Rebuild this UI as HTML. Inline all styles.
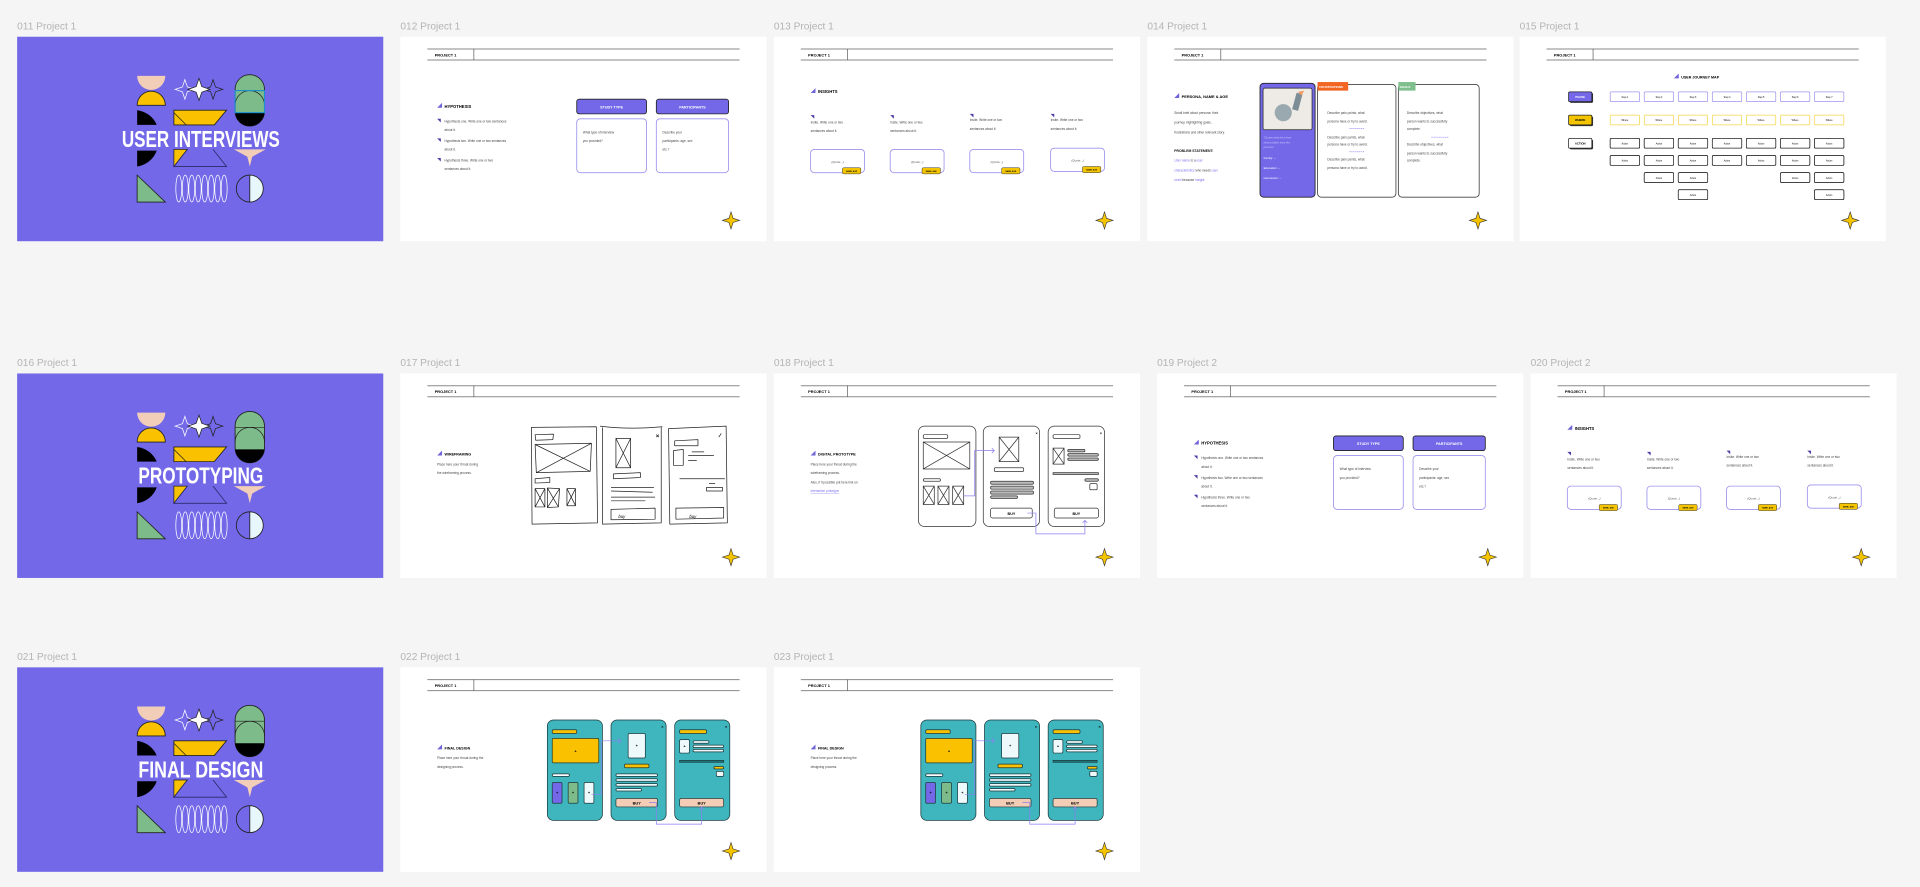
<!DOCTYPE html>
<html><head><meta charset="utf-8">
<style>
html,body{margin:0;padding:0;background:#f5f5f5;overflow:hidden;width:1920px;height:887px}
#w{position:absolute;left:0;top:0;width:1568px;height:724px;transform:scale(1.22449);transform-origin:0 0;font-family:"Liberation Sans",sans-serif}
.l{position:absolute;font-size:8.3px;color:#b4b4b4;white-space:nowrap}
.c{position:absolute;width:299px;height:167px;background:#fff}
.c svg{position:absolute;left:0;top:0;width:299px;height:167px}
.p{background:#7369e8}
text{font-family:"Liberation Sans",sans-serif}
</style></head><body><div id="w">

<svg width="0" height="0" style="position:absolute"><defs>
<g id="hdr">
<line x1="22" y1="10" x2="277" y2="10" stroke="#8a8a8a" stroke-width=".8"/>
<line x1="22" y1="19" x2="277" y2="19" stroke="#8a8a8a" stroke-width=".8"/>
<line x1="60" y1="10" x2="60" y2="19" stroke="#444" stroke-width=".5"/>
</g>
<g id="star"><path d="M270 143 L271.7 148.3 L277 150 L271.7 151.7 L270 157 L268.3 151.7 L263 150 L268.3 148.3Z" fill="#f5c400" stroke="#333" stroke-width=".5"/></g>
<g id="ico"><polygon points="0,4 4,0 4,4" fill="#6f63d9"/></g>
<g id="flag"><polygon points="0,0 3,0 3,3" fill="#4b3fa8"/></g>
<g id="cover">
<path d="M98 32 A11.5 11.5 0 0 0 121 32 Z" fill="#f2cdb8"/>
<path d="M98 56 A11.5 11.5 0 0 1 121 56 Z" fill="#f9c100" stroke="#222" stroke-width=".7"/>
<path d="M98 60 A20 20 0 0 1 114 72 L98 72 Z" fill="#000"/>
<path d="M98 106 A20 20 0 0 0 114 93 L98 93 Z" fill="#000"/>
<polygon points="98,113 98,135 121,135" fill="#7dbb8a" stroke="#222" stroke-width=".7"/>
<path d="M137 35 L139 41 L145 43 L139 45 L137 51 L135 45 L129 43 L135 41Z" fill="none" stroke="#fff" stroke-width=".6"/>
<path d="M160 35 L162 41 L168 43 L162 45 L160 51 L158 45 L152 43 L158 41Z" fill="none" stroke="#222" stroke-width=".6"/>
<path d="M148.5 34 L150.8 40.7 L157.5 43 L150.8 45.3 L148.5 52 L146.2 45.3 L139.5 43 L146.2 40.7Z" fill="#fff" stroke="#222" stroke-width=".6"/>
<polygon points="128,60 171,60 161,72 128,72" fill="#f9c100" stroke="#222" stroke-width=".7"/>
<line x1="128" y1="62" x2="138" y2="72" stroke="#222" stroke-width=".6"/>
<polygon points="128,92 139,92 128,106" fill="#f9c100" stroke="#222" stroke-width=".6"/>
<polyline points="139,92 128,106 171,106 160,92" fill="none" stroke="#2a2a6a" stroke-width=".7"/>
<g fill="none" stroke="#fff" stroke-width=".6">
<ellipse cx="132" cy="124" rx="2.4" ry="11"/><ellipse cx="137.3" cy="124" rx="2.4" ry="11"/><ellipse cx="142.6" cy="124" rx="2.4" ry="11"/><ellipse cx="147.9" cy="124" rx="2.4" ry="11"/><ellipse cx="153.2" cy="124" rx="2.4" ry="11"/><ellipse cx="158.5" cy="124" rx="2.4" ry="11"/><ellipse cx="163.8" cy="124" rx="2.4" ry="11"/><ellipse cx="169.1" cy="124" rx="2.4" ry="11"/></g>
<rect x="178" y="31" width="24" height="42" rx="12" fill="#7dbb8a" stroke="#222" stroke-width=".7"/>
<path d="M178 62 H202 V61 A0 0 0 0 1 202 61 V61 L202 61 A12 12 0 0 1 190 73 A12 12 0 0 1 178 61 Z" fill="#000"/>
<path d="M178 56 A12 12 0 0 1 202 56" fill="none" stroke="#222" stroke-width=".6"/>
<line x1="178" y1="44" x2="202" y2="44" stroke="#222" stroke-width=".5"/>
<polygon points="177,92 203,92 192,98 190,106 188,98" fill="#f2cdb8"/>
<path d="M190 113 A11 11 0 0 1 190 135 Z" fill="#e8f7fb"/>
<circle cx="190" cy="124" r="11" fill="none" stroke="#222" stroke-width=".7"/>
<line x1="190" y1="113" x2="190" y2="135" stroke="#222" stroke-width=".7"/>
</g>
</defs></svg>

<!-- ROW 1 -->
<div class="l" style="left:14px;top:16px">011 Project 1</div>
<div class="c p" style="left:14px;top:30px"><svg viewBox="0 0 299 167"><use href="#cover"/>
<rect x="178" y="44" width="24" height="18" fill="none" stroke="#1b8fd0" stroke-width=".9"/>
<text x="150" y="90" text-anchor="middle" font-size="19" font-weight="bold" fill="#fff" textLength="129" lengthAdjust="spacingAndGlyphs">USER INTERVIEWS</text></svg></div>

<div class="l" style="left:327px;top:16px">012 Project 1</div>
<div class="c" style="left:327px;top:30px"><svg viewBox="0 0 299 167"><use href="#hdr"/><use href="#star"/>
<text x="28" y="16" font-size="3.2" font-weight="bold">PROJECT 1</text>
<use href="#ico" x="30" y="54"/><text x="36" y="58" font-size="3.4" font-weight="bold">HYPOTHESIS</text>
<g font-size="2.6" fill="#444"><use href="#flag" x="30" y="67"/><text x="36" y="70">Hypothesis one. Write one or two sentances</text><text x="36" y="77">about it.</text>
<use href="#flag" x="30" y="83"/><text x="36" y="86">Hypothesis two. Write one or two sentances</text><text x="36" y="93">about it.</text>
<use href="#flag" x="30" y="99"/><text x="36" y="102">Hypothesis three. Write one or two</text><text x="36" y="109">sentances about it.</text></g>
<rect x="144" y="51" width="57" height="12" rx="2" fill="#7468e8" stroke="#222" stroke-width=".7"/><text x="172.5" y="58.5" text-anchor="middle" font-size="3" font-weight="bold" fill="#fff">STUDY TYPE</text>
<rect x="209" y="51" width="59" height="12" rx="2" fill="#7468e8" stroke="#222" stroke-width=".7"/><text x="238.5" y="58.5" text-anchor="middle" font-size="3" font-weight="bold" fill="#fff">PARTICIPANTS</text>
<rect x="144" y="67" width="57" height="44" rx="3" fill="#fff" stroke="#9d94ee" stroke-width=".7"/>
<rect x="209" y="67" width="59" height="44" rx="3" fill="#fff" stroke="#9d94ee" stroke-width=".7"/>
<g font-size="2.6" fill="#444"><text x="149" y="79">What type of interview</text><text x="149" y="86">you provided?</text>
<text x="214" y="79">Describe your</text><text x="214" y="86">participants: age, sex</text><text x="214" y="93">etc.?</text></g></svg></div>

<div class="l" style="left:632px;top:16px">013 Project 1</div>
<div class="c" style="left:632px;top:30px"><svg viewBox="0 0 299 167"><use href="#hdr"/><use href="#star"/>
<text x="28" y="16" font-size="3.2" font-weight="bold">PROJECT 1</text>
<use href="#ico" x="30" y="42"/><text x="36" y="46" font-size="3.4" font-weight="bold">INSIGHTS</text>
<g font-size="2.6" fill="#444">
<use href="#flag" x="30" y="64"/><text x="30" y="71">Insite. Write one or two</text><text x="30" y="78">sentances about it.</text>
<use href="#flag" x="95" y="64"/><text x="95" y="71">Insite. Write one or two</text><text x="95" y="78">sentances about it.</text>
<use href="#flag" x="160" y="63"/><text x="160" y="69">Insite. Write one or two</text><text x="160" y="76">sentances about it.</text>
<use href="#flag" x="226" y="63"/><text x="226" y="69">Insite. Write one or two</text><text x="226" y="76">sentances about it.</text></g>
<g fill="#fff" stroke="#9d94ee" stroke-width=".7"><rect x="30" y="92" width="44" height="19" rx="3"/><rect x="95" y="92" width="44" height="19" rx="3"/><rect x="160" y="92" width="44" height="19" rx="3"/><rect x="226" y="91" width="44" height="19" rx="3"/></g>
<g fill="#f5c400" stroke="#333" stroke-width=".4"><rect x="56" y="107" width="15" height="5" rx="1"/><rect x="121" y="107" width="15" height="5" rx="1"/><rect x="186" y="107" width="15" height="5" rx="1"/><rect x="252" y="106" width="15" height="5" rx="1"/></g>
<g font-size="2.4" font-style="italic" fill="#555" text-anchor="middle"><text x="52" y="103">(Quote...)</text><text x="117" y="103">(Quote...)</text><text x="182" y="103">(Quote...)</text><text x="248" y="102">(Quote...)</text></g>
<g font-size="1.6" font-weight="bold" text-anchor="middle"><text x="63.5" y="110.3">NAME, AGE</text><text x="128.5" y="110.3">NAME, AGE</text><text x="193.5" y="110.3">NAME, AGE</text><text x="259.5" y="109.3">NAME, AGE</text></g></svg></div>

<div class="l" style="left:937px;top:16px">014 Project 1</div>
<div class="c" style="left:937px;top:30px"><svg viewBox="0 0 299 167"><use href="#hdr"/><use href="#star"/>
<text x="28" y="16" font-size="3.2" font-weight="bold">PROJECT 1</text>
<use href="#ico" x="22" y="46"/><text x="28" y="50" font-size="3.2" font-weight="bold">PERSONA, NAME &amp; AGE</text>
<g font-size="2.6" fill="#444"><text x="22" y="63">Small brief about persona: their</text><text x="22" y="71">journey, highlighting goals,</text><text x="22" y="79">frustrations and other relevant story.</text>
<text x="22" y="94" font-weight="bold" fill="#111" font-size="2.8">PROBLEM STATEMENT:</text>
<text x="22" y="102"><tspan fill="#7a6ff0">User name</tspan> is a <tspan fill="#7a6ff0">user</tspan></text>
<text x="22" y="110"><tspan fill="#7a6ff0">characteristics</tspan> who needs <tspan fill="#7a6ff0">user</tspan></text>
<text x="22" y="118"><tspan fill="#7a6ff0">need</tspan> because <tspan fill="#7a6ff0">insight</tspan>.</text></g>
<rect x="92" y="38" width="45" height="93" rx="3" fill="#7468e8" stroke="#222" stroke-width=".7"/>
<rect x="94.5" y="42" width="40" height="34" rx="1.5" fill="#eeeae6" stroke="#222" stroke-width=".6"/>
<circle cx="111" cy="62" r="7" fill="#9aa9b0"/><rect x="120" y="46" width="5" height="14" fill="#7d8d96" transform="rotate(15 122 53)"/><path d="M123 45 l5 -1 l-2 4z" fill="#f49b60"/>
<g font-size="2.1" fill="#c9c3ff" font-style="italic"><text x="95" y="83">"Quotes what best show</text><text x="95" y="87">what problem have this</text><text x="95" y="91">persona."</text></g>
<g font-size="2.4" fill="#fff"><text x="95" y="100">Family: --</text><text x="95" y="108">Education: --</text><text x="95" y="116">Hometown: --</text></g>
<rect x="139" y="39" width="64" height="92" rx="3" fill="#fff" stroke="#444" stroke-width=".7"/>
<rect x="139" y="37" width="25" height="7" fill="#f26522"/><text x="140.5" y="42" font-size="2.5" font-weight="bold" fill="#fff">FRUSTRATIONS</text>
<rect x="205" y="39" width="66" height="92" rx="3" fill="#fff" stroke="#444" stroke-width=".7"/>
<rect x="205" y="37" width="14" height="7" fill="#7fbf8e"/><text x="206" y="42" font-size="2.5" font-weight="bold" fill="#fff">GOALS</text>
<g font-size="2.6" fill="#444"><text x="147" y="63">Describe pain points, what</text><text x="147" y="70">persona have or try to avoid.</text>
<text x="147" y="83">Describe pain points, what</text><text x="147" y="89">persona have or try to avoid.</text>
<text x="147" y="101">Describe pain points, what</text><text x="147" y="108">persona have or try to avoid.</text>
<text x="212" y="63">Describe objectives, what</text><text x="212" y="70">person wants to successfully</text><text x="212" y="76">complete.</text>
<text x="212" y="89">Describe objectives, what</text><text x="212" y="96">person wants to successfully</text><text x="212" y="102">complete.</text></g>
<g stroke="#7a6ff0" stroke-width=".5" stroke-dasharray="1 .6"><line x1="165" y1="75" x2="177" y2="75"/><line x1="165" y1="94" x2="177" y2="94"/><line x1="232" y1="82" x2="246" y2="82"/></g></svg></div>

<div class="l" style="left:1241px;top:16px">015 Project 1</div>
<div class="c" style="left:1241px;top:30px"><svg viewBox="0 0 299 167"><use href="#hdr"/><use href="#star"/>
<text x="28" y="16" font-size="3.2" font-weight="bold">PROJECT 1</text>
<use href="#ico" x="126" y="30"/><text x="132" y="34" font-size="3" font-weight="bold">USER JOURNEY MAP</text>
<g stroke-width=".6">
<rect x="41" y="46" width="19" height="8" rx="1" fill="#333"/><rect x="40" y="45" width="19" height="8" rx="1" fill="#7468e8" stroke="#222"/>
<rect x="41" y="65" width="19" height="8" rx="1" fill="#333"/><rect x="40" y="64" width="19" height="8" rx="1" fill="#f5c400" stroke="#222"/>
<rect x="41" y="84" width="19" height="8" rx="1" fill="#333"/><rect x="40" y="83" width="19" height="8" rx="1" fill="#fff" stroke="#222"/></g>
<g font-size="2.3" text-anchor="middle" font-weight="bold"><text x="49.5" y="50" fill="#fff">PHASE</text><text x="49.5" y="69">WHERE</text><text x="49.5" y="88">ACTION</text></g>
<g id="cols" stroke-width=".6">
<g fill="#fff" stroke="#9d94ee"><rect x="74" y="45" width="24" height="8" rx="1"/><rect x="101.8" y="45" width="24" height="8" rx="1"/><rect x="129.6" y="45" width="24" height="8" rx="1"/><rect x="157.4" y="45" width="24" height="8" rx="1"/><rect x="185.2" y="45" width="24" height="8" rx="1"/><rect x="213" y="45" width="24" height="8" rx="1"/><rect x="240.8" y="45" width="24" height="8" rx="1"/></g>
<g fill="#fff" stroke="#f5d54a"><rect x="74" y="64" width="24" height="8" rx="1"/><rect x="101.8" y="64" width="24" height="8" rx="1"/><rect x="129.6" y="64" width="24" height="8" rx="1"/><rect x="157.4" y="64" width="24" height="8" rx="1"/><rect x="185.2" y="64" width="24" height="8" rx="1"/><rect x="213" y="64" width="24" height="8" rx="1"/><rect x="240.8" y="64" width="24" height="8" rx="1"/></g>
<g fill="#fff" stroke="#222" style="filter:drop-shadow(.7px .7px 0 #333)">
<rect x="74" y="83" width="24" height="8" rx="1"/><rect x="101.8" y="83" width="24" height="8" rx="1"/><rect x="129.6" y="83" width="24" height="8" rx="1"/><rect x="157.4" y="83" width="24" height="8" rx="1"/><rect x="185.2" y="83" width="24" height="8" rx="1"/><rect x="213" y="83" width="24" height="8" rx="1"/><rect x="240.8" y="83" width="24" height="8" rx="1"/>
<rect x="74" y="97" width="24" height="8" rx="1"/><rect x="101.8" y="97" width="24" height="8" rx="1"/><rect x="129.6" y="97" width="24" height="8" rx="1"/><rect x="157.4" y="97" width="24" height="8" rx="1"/><rect x="185.2" y="97" width="24" height="8" rx="1"/><rect x="213" y="97" width="24" height="8" rx="1"/><rect x="240.8" y="97" width="24" height="8" rx="1"/>
<rect x="101.8" y="111" width="24" height="8" rx="1"/><rect x="129.6" y="111" width="24" height="8" rx="1"/><rect x="213" y="111" width="24" height="8" rx="1"/><rect x="240.8" y="111" width="24" height="8" rx="1"/>
<rect x="129.6" y="125" width="24" height="8" rx="1"/><rect x="240.8" y="125" width="24" height="8" rx="1"/></g></g>
<g font-size="1.9" text-anchor="middle">
<text x="86" y="50">Step 1</text><text x="113.8" y="50">Step 2</text><text x="141.6" y="50">Step 3</text><text x="169.4" y="50">Step 4</text><text x="197.2" y="50">Step 5</text><text x="225" y="50">Step 6</text><text x="252.8" y="50">Step 7</text>
<text x="86" y="69">Where</text><text x="113.8" y="69">Where</text><text x="141.6" y="69">Where</text><text x="169.4" y="69">Where</text><text x="197.2" y="69">Where</text><text x="225" y="69">Where</text><text x="252.8" y="69">Where</text>
<text x="86" y="88">Action</text><text x="113.8" y="88">Action</text><text x="141.6" y="88">Action</text><text x="169.4" y="88">Action</text><text x="197.2" y="88">Action</text><text x="225" y="88">Action</text><text x="252.8" y="88">Action</text>
<text x="86" y="102">Action</text><text x="113.8" y="102">Action</text><text x="141.6" y="102">Action</text><text x="169.4" y="102">Action</text><text x="197.2" y="102">Action</text><text x="225" y="102">Action</text><text x="252.8" y="102">Action</text>
<text x="113.8" y="116">Action</text><text x="141.6" y="116">Action</text><text x="225" y="116">Action</text><text x="252.8" y="116">Action</text>
<text x="141.6" y="130">Action</text><text x="252.8" y="130">Action</text></g></svg></div>

<!-- ROW 2 -->
<div class="l" style="left:14px;top:291px">016 Project 1</div>
<div class="c p" style="left:14px;top:305px"><svg viewBox="0 0 299 167"><use href="#cover"/>
<text x="150" y="90" text-anchor="middle" font-size="19" font-weight="bold" fill="#fff" textLength="102" lengthAdjust="spacingAndGlyphs">PROTOTYPING</text></svg></div>

<div class="l" style="left:327px;top:291px">017 Project 1</div>
<div class="c" style="left:327px;top:305px"><svg viewBox="0 0 299 167"><use href="#hdr"/><use href="#star"/>
<text x="28" y="16" font-size="3.2" font-weight="bold">PROJECT 1</text>
<use href="#ico" x="30" y="63"/><text x="36" y="67" font-size="3" font-weight="bold">WIREFRAMING</text>
<g font-size="2.6" fill="#444"><text x="30" y="75">Place here your throat during</text><text x="30" y="82">the wireframing process.</text></g>
<g fill="none" stroke="#222" stroke-width=".6" stroke-linejoin="round">
<path d="M107 44 L160 43.5 L161 122 L107.5 123 Z"/>
<path d="M110 50 L125 49.5 L124.5 54 L110.5 54.5Z"/>
<path d="M110 58 L156 57 L155 80 L111 81Z M110 58 L155 80 M156 57 L111 81"/>
<path d="M110 86 L122 85 L122 89 L110 89.5Z"/>
<path d="M110 94 L118 94 L118 109 L110 109Z M110 94 L118 109 M118 94 L110 109"/>
<path d="M120 93.5 L130 94 L129 109 L120 109.5Z M120 93.5 L129 109 M130 94 L120 109.5"/>
<path d="M136 94 L143 94 L143 108 L136 108Z M136 94 L143 108 M143 94 L136 108"/>
<path d="M165 44 L165 123 L213 122 L213 44 M163 43 Q185 46 214 43.5"/>
<path d="M176 53 L188 53 L188 77 L176 77Z M176 53 L188 77 M188 53 L176 77"/>
<path d="M174 82 L196 81 L196 85 L174 86Z"/>
<path d="M172 93 L207 93 M172 96 L206 97 M172 101 L208 101 M172 104 L200 104"/>
<path d="M172 111 L208 110 L208 119 L172 119.5Z"/><path d="M209 52 l2 -2 M209 50 l2 2"/>
<path d="M219 45 L266 43 L267 122 L220 123Z"/>
<path d="M224 55 L243 54 L243 59 L224 59Z M223 63 L231 62 L231 75 L223 75Z M238 64 L248 64 M235 67 L256 67 M235 71 L242 71 M228 86 L265 86 M252 90 L257 90 M250 93 L263 93 L263 96 L250 96Z"/>
<path d="M225 110 L264 109.5 L264 118 L225 119Z"/><path d="M260 52 l2 -3"/></g>
<g font-size="3.5" font-style="italic"><text x="178" y="118">buy</text><text x="236" y="118">buy</text></g></svg></div>

<div class="l" style="left:632px;top:291px">018 Project 1</div>
<div class="c" style="left:632px;top:305px"><svg viewBox="0 0 299 167"><use href="#hdr"/><use href="#star"/>
<text x="28" y="16" font-size="3.2" font-weight="bold">PROJECT 1</text>
<use href="#ico" x="30" y="63"/><text x="36" y="67" font-size="3" font-weight="bold">DIGITAL PROTOTYPE</text>
<g font-size="2.6" fill="#444"><text x="30" y="75">Place here your throat during the</text><text x="30" y="82">wireframing process.</text><text x="30" y="90">Also, if it possible put here link on</text><text x="30" y="97" fill="#7a6ff0" text-decoration="underline">interactive prototype</text></g>
<g fill="#fff" stroke="#333" stroke-width=".6">
<rect x="118" y="43" width="47" height="82" rx="5"/><rect x="171" y="43" width="46" height="82" rx="5"/><rect x="224" y="43" width="46" height="82" rx="5"/>
<rect x="122" y="50" width="20" height="3" rx="1"/><path d="M122 56 H160 V78 H122Z M122 56 L160 78 M160 56 L122 78"/><rect x="122" y="86" width="14" height="2" rx="1"/>
<path d="M122 92 H131 V107 H122Z M122 92 L131 107 M131 92 L122 107 M134 92 H143 V107 H134Z M134 92 L143 107 M143 92 L134 107 M146 92 H155 V107 H146Z M146 92 L155 107 M155 92 L146 107"/>
<path d="M184 52 H200 V72 H184Z M184 52 L200 72 M200 52 L184 72"/><rect x="180" y="77" width="24" height="3" rx="1"/>
<g fill="#bbb"><rect x="177" y="88" width="35" height="2.5" rx="1"/><rect x="177" y="92" width="35" height="2.5" rx="1"/><rect x="177" y="96" width="35" height="2.5" rx="1"/><rect x="177" y="100" width="22" height="2" rx="1"/></g>
<rect x="177" y="110" width="34" height="8" rx="1.5"/><rect x="229" y="110" width="36" height="8" rx="1.5"/>
<rect x="228" y="50" width="22" height="3" rx="1"/><path d="M228 61 H237 V74 H228Z M228 61 L237 74 M237 61 L228 74"/>
<g fill="#bbb"><rect x="240" y="62" width="14" height="2" rx="1"/><rect x="240" y="65.5" width="25" height="2" rx="1"/><rect x="240" y="69" width="25" height="2" rx="1"/><rect x="228" y="81" width="37" height="1.5"/><rect x="254" y="86" width="11" height="2" rx="1"/></g><rect x="258" y="90" width="6" height="5" rx="1"/></g>
<g font-size="3" font-weight="bold" text-anchor="middle"><text x="194" y="115.5">BUY</text><text x="247" y="115.5">BUY</text><text x="214.5" y="50">×</text><text x="267" y="50">×</text></g>
<g fill="none" stroke="#8a7ff0" stroke-width=".6"><path d="M155 100 H164 V63 H180 M178 61 L180 63 L178 65"/><path d="M207 114 H214 V131 H254 V120 M252 122 L254 120 L256 122"/></g></svg></div>

<div class="l" style="left:945px;top:291px">019 Project 2</div>
<div class="c" style="left:945px;top:305px"><svg viewBox="0 0 299 167"><use href="#hdr"/><use href="#star"/>
<text x="28" y="16" font-size="3.2" font-weight="bold">PROJECT 1</text>
<use href="#ico" x="30" y="54"/><text x="36" y="58" font-size="3.4" font-weight="bold">HYPOTHESIS</text>
<g font-size="2.6" fill="#444"><use href="#flag" x="30" y="67"/><text x="36" y="70">Hypothesis one. Write one or two sentances</text><text x="36" y="77">about it.</text>
<use href="#flag" x="30" y="83"/><text x="36" y="86">Hypothesis two. Write one or two sentances</text><text x="36" y="93">about it.</text>
<use href="#flag" x="30" y="99"/><text x="36" y="102">Hypothesis three. Write one or two</text><text x="36" y="109">sentances about it.</text></g>
<rect x="144" y="51" width="57" height="12" rx="2" fill="#7468e8" stroke="#222" stroke-width=".7"/><text x="172.5" y="58.5" text-anchor="middle" font-size="3" font-weight="bold" fill="#fff">STUDY TYPE</text>
<rect x="209" y="51" width="59" height="12" rx="2" fill="#7468e8" stroke="#222" stroke-width=".7"/><text x="238.5" y="58.5" text-anchor="middle" font-size="3" font-weight="bold" fill="#fff">PARTICIPANTS</text>
<rect x="144" y="67" width="57" height="44" rx="3" fill="#fff" stroke="#9d94ee" stroke-width=".7"/>
<rect x="209" y="67" width="59" height="44" rx="3" fill="#fff" stroke="#9d94ee" stroke-width=".7"/>
<g font-size="2.6" fill="#444"><text x="149" y="79">What type of interview</text><text x="149" y="86">you provided?</text>
<text x="214" y="79">Describe your</text><text x="214" y="86">participants: age, sex</text><text x="214" y="93">etc.?</text></g></svg></div>

<div class="l" style="left:1250px;top:291px">020 Project 2</div>
<div class="c" style="left:1250px;top:305px"><svg viewBox="0 0 299 167"><use href="#hdr"/><use href="#star"/>
<text x="28" y="16" font-size="3.2" font-weight="bold">PROJECT 1</text>
<use href="#ico" x="30" y="42"/><text x="36" y="46" font-size="3.4" font-weight="bold">INSIGHTS</text>
<g font-size="2.6" fill="#444">
<use href="#flag" x="30" y="64"/><text x="30" y="71">Insite. Write one or two</text><text x="30" y="78">sentances about it.</text>
<use href="#flag" x="95" y="64"/><text x="95" y="71">Insite. Write one or two</text><text x="95" y="78">sentances about it.</text>
<use href="#flag" x="160" y="63"/><text x="160" y="69">Insite. Write one or two</text><text x="160" y="76">sentances about it.</text>
<use href="#flag" x="226" y="63"/><text x="226" y="69">Insite. Write one or two</text><text x="226" y="76">sentances about it.</text></g>
<g fill="#fff" stroke="#9d94ee" stroke-width=".7"><rect x="30" y="92" width="44" height="19" rx="3"/><rect x="95" y="92" width="44" height="19" rx="3"/><rect x="160" y="92" width="44" height="19" rx="3"/><rect x="226" y="91" width="44" height="19" rx="3"/></g>
<g fill="#f5c400" stroke="#333" stroke-width=".4"><rect x="56" y="107" width="15" height="5" rx="1"/><rect x="121" y="107" width="15" height="5" rx="1"/><rect x="186" y="107" width="15" height="5" rx="1"/><rect x="252" y="106" width="15" height="5" rx="1"/></g>
<g font-size="2.4" font-style="italic" fill="#555" text-anchor="middle"><text x="52" y="103">(Quote...)</text><text x="117" y="103">(Quote...)</text><text x="182" y="103">(Quote...)</text><text x="248" y="102">(Quote...)</text></g>
<g font-size="1.6" font-weight="bold" text-anchor="middle"><text x="63.5" y="110.3">NAME, AGE</text><text x="128.5" y="110.3">NAME, AGE</text><text x="193.5" y="110.3">NAME, AGE</text><text x="259.5" y="109.3">NAME, AGE</text></g></svg></div>

<!-- ROW 3 -->
<div class="l" style="left:14px;top:531px">021 Project 1</div>
<div class="c p" style="left:14px;top:545px"><svg viewBox="0 0 299 167"><use href="#cover"/>
<text x="150" y="90" text-anchor="middle" font-size="19" font-weight="bold" fill="#fff" textLength="102" lengthAdjust="spacingAndGlyphs">FINAL DESIGN</text></svg></div>

<div class="l" style="left:327px;top:531px">022 Project 1</div>
<div class="c" style="left:327px;top:545px"><svg viewBox="0 0 299 167"><g id="fd"><use href="#hdr"/><use href="#star"/>
<text x="28" y="16" font-size="3.2" font-weight="bold">PROJECT 1</text>
<use href="#ico" x="30" y="63"/><text x="36" y="67" font-size="3" font-weight="bold">FINAL DESIGN</text>
<g font-size="2.6" fill="#444"><text x="30" y="75">Place here your throat during the</text><text x="30" y="82">designing process.</text></g>
<g stroke="#1c3a3c" stroke-width=".6">
<rect x="120" y="43" width="45" height="82" rx="5" fill="#3fb5bd"/><rect x="172" y="43" width="45" height="82" rx="5" fill="#3fb5bd"/><rect x="224" y="43" width="45" height="82" rx="5" fill="#3fb5bd"/>
<rect x="124" y="51" width="20" height="3" rx="1" fill="#f9c100"/><rect x="124" y="58" width="38" height="20" rx="1" fill="#f9c100"/><rect x="124" y="87" width="14" height="2" rx="1" fill="#fff"/>
<rect x="124" y="94" width="8" height="17" rx="1" fill="#7468e8"/><rect x="137" y="94" width="8" height="17" rx="1" fill="#7dbb8a"/><rect x="150" y="94" width="8" height="17" rx="1" fill="#eef9fb"/>
<rect x="186" y="54" width="14" height="20" rx="1" fill="#eef9fb"/><rect x="183" y="79" width="20" height="3" rx="1" fill="#f9c100"/>
<g fill="#eef9fb"><rect x="176" y="87" width="34" height="2" rx="1"/><rect x="176" y="91" width="34" height="2" rx="1"/><rect x="176" y="95" width="34" height="2" rx="1"/><rect x="176" y="99" width="21" height="2" rx="1"/></g>
<rect x="176" y="107" width="34" height="7" rx="1.5" fill="#f3cdb5"/><rect x="228" y="107" width="36" height="7" rx="1.5" fill="#f3cdb5"/>
<rect x="228" y="51" width="22" height="3" rx="1" fill="#f9c100"/><rect x="228" y="59" width="8" height="11" rx="1" fill="#eef9fb"/>
<g fill="#eef9fb"><rect x="239" y="60" width="13" height="2" rx="1"/><rect x="239" y="63.5" width="25" height="2" rx="1"/><rect x="239" y="67" width="25" height="2" rx="1"/></g><rect x="228" y="76" width="36" height="1.5" fill="#1f7a80"/><rect x="256" y="81" width="8" height="2" rx="1" fill="#f9c100"/><rect x="258" y="85" width="6" height="4" rx="1" fill="#eef9fb"/></g>
<g font-size="3.2" font-weight="bold" text-anchor="middle"><text x="143" y="69.5">+</text><text x="128" y="103.5">+</text><text x="141" y="103.5">+</text><text x="154" y="103.5">+</text><text x="193" y="65">+</text><text x="232" y="65.5">+</text><text x="193" y="112">BUY</text><text x="246" y="112">BUY</text><text x="214" y="49.5">×</text><text x="266" y="49.5">×</text></g>
<g fill="none" stroke="#8a7ff0" stroke-width=".6"><path d="M156 104 H164 V60 H180 M178 58 L180 60 L178 62"/><path d="M203 110.5 H209 V128 H246 V114 M244 116 L246 114 L248 116"/></g></g></svg></div>

<div class="l" style="left:632px;top:531px">023 Project 1</div>
<div class="c" style="left:632px;top:545px"><svg viewBox="0 0 299 167"><use href="#fd"/></svg></div>

</div></body></html>
